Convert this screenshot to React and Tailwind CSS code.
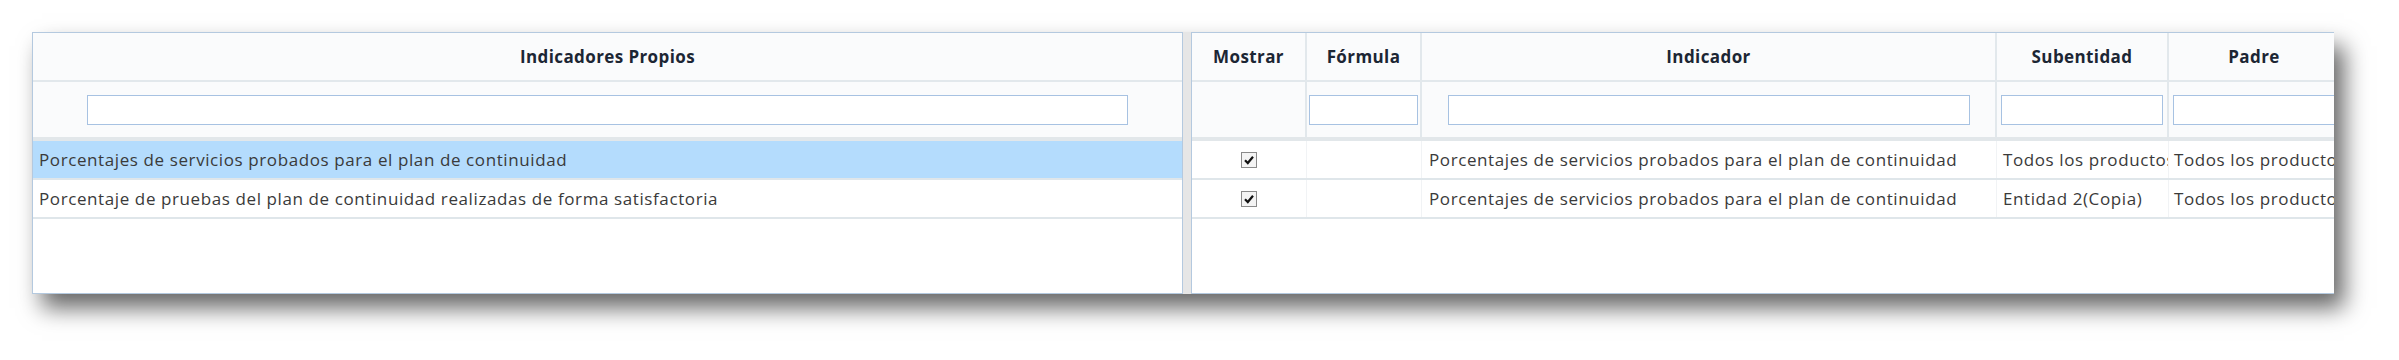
const font = { fontFamily: '"Open Sans", "Liberation Sans", sans-serif' };

const leftRows = [
  "Porcentajes de servicios probados para el plan de continuidad",
  "Porcentaje de pruebas del plan de continuidad realizadas de forma satisfactoria",
];

const rightRows = [
  { indicador: "Porcentajes de servicios probados para el plan de continuidad", sub: "Todos los productos", padre: "Todos los productos" },
  { indicador: "Porcentajes de servicios probados para el plan de continuidad", sub: "Entidad 2(Copia)", padre: "Todos los productos" },
];

function Check() {
  return (
    <span className="flex h-[16px] w-[16px] items-center justify-center border border-[#8a8a8a] bg-[#f4f4f4]">
      <svg width="12" height="12" viewBox="0 0 12 12">
        <path d="M2 6.2 L4.8 9 L10 2.8" fill="none" stroke="#111" strokeWidth="2.2" />
      </svg>
    </span>
  );
}

function FilterInput({ w }) {
  return <input className={`h-[30px] border border-[#a7c2e2] bg-white ${w}`} />;
}

export default function App() {
  return (
    <div className="h-[360px] w-full bg-white pl-[32px] pt-[32px] text-[#3a3a3a]" style={font}>
      <div className="flex h-[262px] w-[2302px] shadow-[10px_14px_22px_rgba(0,0,0,0.6)]">
        {/* Indicadores propios */}
        <div className="flex w-[1151px] flex-col border border-[#b4c9df] bg-white">
          <div className="flex h-[49px] items-center justify-center border-b-2 border-[#e2e8ec] bg-[#fafbfc] text-[17px] font-bold tracking-[0.4px] text-[#1c2634]">
            Indicadores Propios
          </div>
          <div className="flex h-[59px] items-center justify-center border-b-4 border-[#e2e7ea] bg-[#fafbfc]">
            <FilterInput w="w-[1041px]" />
          </div>
          {leftRows.map((r, i) => (
            <div
              key={i}
              className={`flex h-[39px] items-center border-b-2 border-[#dfe6ea] px-[6px] text-[17px] tracking-[0.6px] ${i === 0 ? "bg-[#b4dcfd]" : "bg-white"}`}
            >
              {r}
            </div>
          ))}
        </div>

        <div className="w-[8px] bg-[#e6e6e6]" />

        {/* Tabla de indicadores */}
        <div className="flex flex-1 flex-col overflow-hidden border border-r-0 border-[#b4c9df] bg-white">
          <div className="flex h-[49px] border-b-2 border-[#e2e8ec] bg-[#fafbfc] text-[17px] font-bold tracking-[0.4px] text-[#1c2634]">
            <div className="flex w-[115px] shrink-0 items-center justify-center border-r-2 border-[#e2e8ec]">Mostrar</div>
            <div className="flex w-[115px] shrink-0 items-center justify-center border-r-2 border-[#e2e8ec]">Fórmula</div>
            <div className="flex w-[575px] shrink-0 items-center justify-center border-r-2 border-[#e2e8ec]">Indicador</div>
            <div className="flex w-[172px] shrink-0 items-center justify-center border-r-2 border-[#e2e8ec]">Subentidad</div>
            <div className="flex w-[170px] shrink-0 items-center justify-center">Padre</div>
          </div>
          <div className="flex h-[59px] border-b-4 border-[#e2e7ea] bg-[#fafbfc]">
            <div className="w-[115px] shrink-0 border-r-2 border-[#e2e8ec]" />
            <div className="flex w-[115px] shrink-0 items-center justify-center border-r-2 border-[#e2e8ec]">
              <FilterInput w="w-[109px]" />
            </div>
            <div className="flex w-[575px] shrink-0 items-center justify-center border-r-2 border-[#e2e8ec]">
              <FilterInput w="w-[522px]" />
            </div>
            <div className="flex w-[172px] shrink-0 items-center justify-center border-r-2 border-[#e2e8ec]">
              <FilterInput w="w-[162px]" />
            </div>
            <div className="flex w-[170px] shrink-0 items-center pl-[4px]">
              <FilterInput w="w-[162px]" />
            </div>
          </div>
          {rightRows.map((r, i) => (
            <div key={i} className="flex h-[39px] border-b-2 border-[#dfe6ea] text-[17px] tracking-[0.6px]">
              <div className="flex w-[115px] shrink-0 items-center justify-center border-r border-[#f1f3f5]">
                <Check />
              </div>
              <div className="w-[115px] shrink-0 border-r border-[#f1f3f5]" />
              <div className="flex w-[575px] shrink-0 items-center border-r border-[#f1f3f5] px-[7px] whitespace-nowrap">
                {r.indicador}
              </div>
              <div className="flex w-[172px] shrink-0 items-center overflow-hidden border-r border-[#f1f3f5] pl-[6px] whitespace-nowrap">
                {r.sub}
              </div>
              <div className="flex w-[170px] shrink-0 items-center overflow-hidden pl-[5px] whitespace-nowrap">
                {r.padre}
              </div>
            </div>
          ))}
        </div>
      </div>
    </div>
  );
}
